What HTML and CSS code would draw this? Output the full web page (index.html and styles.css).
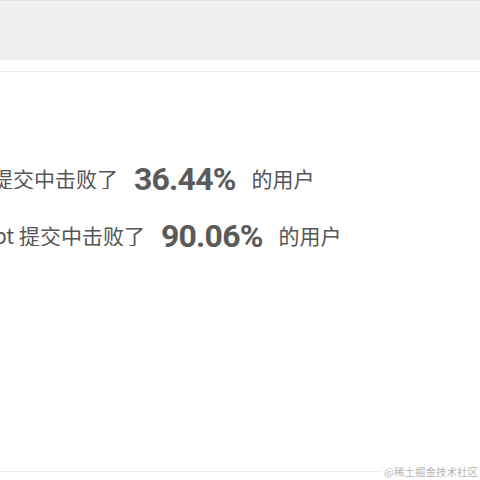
FILE: index.html
```html
<!DOCTYPE html>
<html lang="zh">
<head>
<meta charset="utf-8">
<link rel="stylesheet" href="styles.css">
</head>
<body>
<div class="page">
  <div class="topbar"></div>
  <div class="divider"></div>
  <div class="stats">
    <div class="row">
      <span class="prefix p1"><span>执行用时： 84 ms , 在所有 JavaScript 提交中击败了</span></span>
      <span class="num">36.44%</span>
      <span class="suffix">的用户</span>
    </div>
    <div class="row">
      <span class="prefix p2"><span>内存消耗： 39.5 MB , 在所有 JavaScript 提交中击败了</span></span>
      <span class="num">90.06%</span>
      <span class="suffix">的用户</span>
    </div>
  </div>
  <div class="footer">
    <div class="footline"></div>
    <span class="mark">@稀土掘金技术社区</span>
  </div>
</div>
</body>
</html>
```
FILE: styles.css
```css
html, body {
  margin: 0;
  padding: 0;
  background: #ffffff;
}
.page {
  width: 480px;
  height: 480px;
  display: flex;
  flex-direction: column;
  overflow: hidden;
}
.topbar {
  height: 59px;
  background: #f0f0f0;
  border-top: 1px solid #e2e2e2;
  flex: none;
}
.divider {
  margin-top: 11px;
  height: 1px;
  background: #ebebeb;
  flex: none;
}
.stats {
  padding-top: 78px;
  flex: 1;
}
.row {
  height: 57px;
  display: flex;
  align-items: center;
  font-family: "Noto Sans CJK SC", "Noto Sans", sans-serif;
  font-size: 21px;
  line-height: 21px;
  color: #555555;
  white-space: nowrap;
}
.prefix {
  display: flex;
  justify-content: flex-end;
  overflow: hidden;
  flex: none;
}
.p1 { width: 118px; }
.p2 { width: 145px; }
.num {
  font-family: Roboto, "Liberation Sans", sans-serif;
  font-weight: 700;
  font-size: 32px;
  line-height: 32px;
  letter-spacing: -0.8px;
  color: #5a5a5a;
  margin-left: 16px;
  margin-right: 16px;
}
.footer {
  height: 18px;
  display: flex;
  align-items: center;
  flex: none;
}
.footline {
  flex: 1;
  height: 1px;
  background: #ececec;
}
.mark {
  font-family: "Noto Sans CJK SC", sans-serif;
  font-size: 10.5px;
  color: #b5b5b5;
  padding: 0 2px 0 2px;
}
```
